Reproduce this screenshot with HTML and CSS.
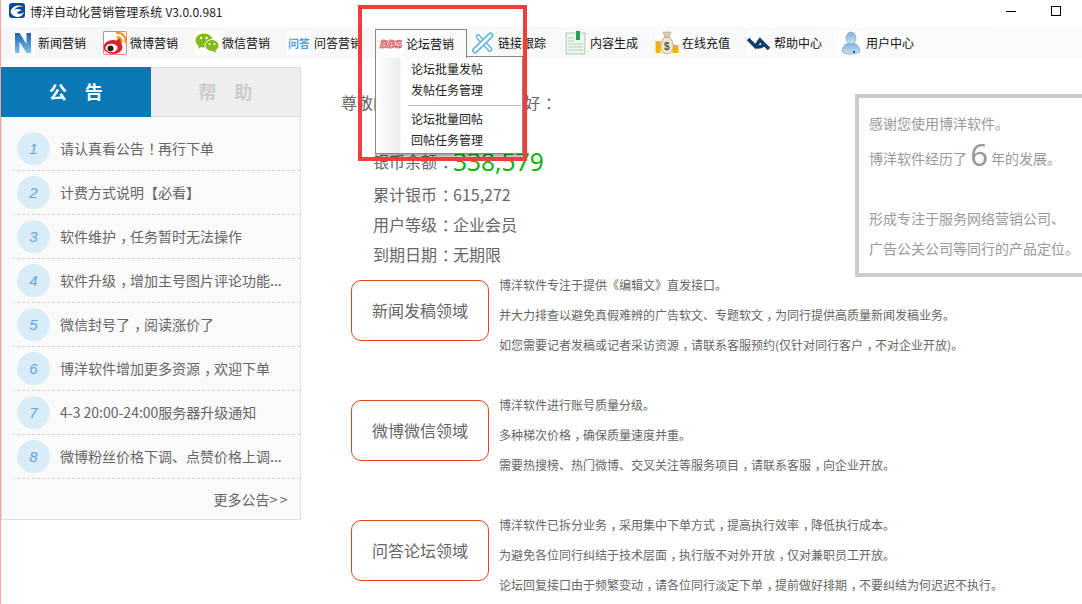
FILE: index.html
```html
<!DOCTYPE html>
<html lang="zh-CN">
<head>
<meta charset="utf-8">
<title>博洋自动化营销管理系统</title>
<link rel="stylesheet" href="styles.css">
</head>
<body>
<div class="app">
  <header class="titlebar">
    <svg class="logo" viewBox="0 0 16 16"><rect x="0" y="0" width="16" height="15" rx="3" fill="#0d4a94"/><path d="M1.500 9C2.500 4 8 1 14.500 3.500C10 3 6 4.500 5 7.500C7 5.500 11 5.500 12.500 8C10 8 8.500 8.500 8 10C10 11.500 13 11 15 9C14 13 9 15 6 13.500C4 12.500 2 11 1.500 9Z" fill="#fff"/></svg>
    <span class="title">博洋自动化营销管理系统 V3.0.0.981</span>
    <div class="winbtns"><i class="win-min"></i><i class="win-max"></i></div>
  </header>

  <nav class="toolbar">
    <a class="tool"><span class="ico"><svg viewBox="0 0 24 24"><defs><linearGradient id="ng" x1="0" y1="0" x2="0" y2="1"><stop offset="0" stop-color="#1c62ad"/><stop offset="1" stop-color="#7cc2ec"/></linearGradient></defs><path d="M4 22V2h4.500l7 11V2h4.500v20h-4.500l-7-11v11Z" fill="url(#ng)"/></svg></span><span class="lbl">新闻营销</span></a>
    <a class="tool"><span class="ico ico-red"><svg viewBox="0 0 24 24"><ellipse cx="10" cy="16" rx="9.500" ry="7" fill="#d8232a"/><path d="M13 10.500C15 6 21 6 18 13Z" fill="#d8232a"/><ellipse cx="8.500" cy="17" rx="6" ry="4.200" fill="#fff"/><circle cx="7.500" cy="17.500" r="3" fill="#222"/><path d="M13 2C20 1 24 7 22 12M13.500 6.500C17 6 19 8 18.500 11" fill="none" stroke="#f39a1e" stroke-width="2.200"/></svg></span><span class="lbl">微博营销</span></a>
    <a class="tool"><span class="ico"><svg viewBox="0 0 24 24"><ellipse cx="9" cy="9.500" rx="8.500" ry="7" fill="#83b81a"/><path d="M4 14l-1 4 5-3Z" fill="#83b81a"/><ellipse cx="17" cy="14.500" rx="7" ry="6" fill="#83b81a" stroke="#fff"/><path d="M20 19l2 3-5-2Z" fill="#83b81a"/><circle cx="6" cy="7" r="1.200" fill="#fff"/><circle cx="11.500" cy="7" r="1.200" fill="#fff"/><circle cx="14.500" cy="13" r="1" fill="#fff"/><circle cx="19.500" cy="13" r="1" fill="#fff"/></svg></span><span class="lbl">微信营销</span></a>
    <a class="tool"><span class="ico"><span class="wenda">问答</span></span><span class="lbl">问答营销</span></a>
    <a class="tool tool-open"><span class="ico"><span class="bbs">BBS</span></span><span class="lbl">论坛营销</span></a>
    <a class="tool"><span class="ico"><svg viewBox="0 0 24 24"><g fill="none" stroke-linecap="round"><path d="M7 5.500L19 18.500" stroke="#62b7ea" stroke-width="5"/><path d="M7 5.500L19 18.500" stroke="#fff" stroke-width="2"/><path d="M4 19.500L19.500 4.500" stroke="#62b7ea" stroke-width="6"/><path d="M4 19.500L19.500 4.500" stroke="#fff" stroke-width="2.600"/></g></svg></span><span class="lbl">链接跟踪</span></a>
    <a class="tool"><span class="ico"><svg viewBox="0 0 24 24"><rect x="3" y="2" width="19" height="21" fill="#eef4ee" stroke="#a8c8b0"/><rect x="13" y="0" width="4" height="9" fill="#27a05a"/><path d="M5 7h6M5 10h6M5 13h15M5 16h15M5 19h15" stroke="#b8ccbc"/></svg></span><span class="lbl">内容生成</span></a>
    <a class="tool"><span class="ico"><svg viewBox="0 0 24 24"><rect x="0.500" y="10" width="5" height="12" fill="#f3ae12"/><rect x="17.500" y="14" width="6" height="8" fill="#f3ae12"/><path d="M10 6C4 10 4 23 12 23C20 23 20 10 14 6Z" fill="#eee6d0" stroke="#a89c78" stroke-width=".8"/><path d="M8 1h8l-2 5h-4Z" fill="#d8cfb4" stroke="#a89c78" stroke-width=".6"/><text x="9" y="18.500" class="dollar">$</text></svg></span><span class="lbl">在线充值</span></a>
    <a class="tool"><span class="ico"><svg viewBox="0 0 24 24"><path d="M1 8L8.500 15.500L13 9L22 18M8.500 15.500Q14 17 17 13" fill="none" stroke="#113e6e" stroke-width="3.600"/></svg></span><span class="lbl">帮助中心</span></a>
    <a class="tool"><span class="ico"><svg viewBox="0 0 24 24"><defs><linearGradient id="ug" x1="0" y1="0" x2="0" y2="1"><stop offset="0" stop-color="#7fb0e0"/><stop offset="1" stop-color="#cfe1f3"/></linearGradient></defs><path d="M3 21C3 15 7 12 12 12C17 12 21 15 21 21C15 24 9 24 3 21Z" fill="url(#ug)" stroke="#6a93bd" stroke-width=".6"/><ellipse cx="12" cy="7" rx="5" ry="6" fill="url(#ug)" stroke="#6a93bd" stroke-width=".5"/><circle cx="15" cy="21" r="1" fill="#123"/></svg></span><span class="lbl">用户中心</span></a>
  </nav>

  <main class="body">
    <aside class="side">
      <div class="tabs"><div class="tab tab-on">公告</div><div class="tab">帮助</div></div>
      <ul class="news">
        <li><b>1</b>请认真看公告<span class="cp">！</span>再行下单</li>
        <li><b>2</b>计费方式说明【必看】</li>
        <li><b>3</b>软件维护<span class="cp">，</span>任务暂时无法操作</li>
        <li><b>4</b>软件升级<span class="cp">，</span>增加主号图片评论功能...</li>
        <li><b>5</b>微信封号了<span class="cp">，</span>阅读涨价了</li>
        <li><b>6</b>博洋软件增加更多资源<span class="cp">，</span>欢迎下单</li>
        <li><b>7</b>4-3 20:00-24:00服务器升级通知</li>
        <li><b>8</b>微博粉丝价格下调、点赞价格上调...</li>
      </ul>
      <div class="more">更多公告<span class="arrows">&gt;&gt;</span></div>
    </aside>

    <section class="content">
      <div class="top">
        <div class="info">
          <p class="greet">尊敬的 博洋软件 用户<span class="cp">，</span>您好<span class="cp">：</span></p>
          <p class="line line-first">银币余额<span class="cp">：</span><span class="coin">338,579</span></p>
          <p class="line">累计银币<span class="cp">：</span>615,272</p>
          <p class="line">用户等级<span class="cp">：</span>企业会员</p>
          <p class="line">到期日期<span class="cp">：</span>无期限</p>
        </div>
        <div class="about">
          <p class="about-first">感谢您使用博洋软件。</p>
          <p class="about-years">博洋软件经历了 <span class="six">6</span> 年的发展。</p>
          <p class="gap">形成专注于服务网络营销公司、</p>
          <p>广告公关公司等同行的产品定位。</p>
        </div>
      </div>
      <div class="fields">
        <div class="field">
          <div class="tag">新闻发稿领域</div>
          <div class="desc">
            <p>博洋软件专注于提供《编辑文》直发接口。</p>
            <p>并大力排查以避免真假难辨的广告软文、专题软文<span class="cp">，</span>为同行提供高质量新闻发稿业务。</p>
            <p>如您需要记者发稿或记者采访资源<span class="cp">，</span>请联系客服预约(仅针对同行客户<span class="cp">，</span>不对企业开放)。</p>
          </div>
        </div>
        <div class="field">
          <div class="tag">微博微信领域</div>
          <div class="desc">
            <p>博洋软件进行账号质量分级。</p>
            <p>多种梯次价格<span class="cp">，</span>确保质量速度并重。</p>
            <p>需要热搜榜、热门微博、交叉关注等服务项目<span class="cp">，</span>请联系客服<span class="cp">，</span>向企业开放。</p>
          </div>
        </div>
        <div class="field">
          <div class="tag">问答论坛领域</div>
          <div class="desc">
            <p>博洋软件已拆分业务<span class="cp">，</span>采用集中下单方式<span class="cp">，</span>提高执行效率<span class="cp">，</span>降低执行成本。</p>
            <p>为避免各位同行纠结于技术层面<span class="cp">，</span>执行版不对外开放<span class="cp">，</span>仅对兼职员工开放。</p>
            <p>论坛回复接口由于频繁变动<span class="cp">，</span>请各位同行淡定下单<span class="cp">，</span>提前做好排期<span class="cp">，</span>不要纠结为何迟迟不执行。</p>
          </div>
        </div>
      </div>
    </section>
  </main>

  <div class="menu">
    <div class="menu-item">论坛批量发帖</div>
    <div class="menu-item">发帖任务管理</div>
    <div class="menu-sep"></div>
    <div class="menu-item">论坛批量回帖</div>
    <div class="menu-item">回帖任务管理</div>
  </div>
  <div class="callout"></div>
  <div class="edge"></div>
</div>
</body>
</html>
```
FILE: styles.css
```css
* { box-sizing: border-box; margin: 0; padding: 0; }
html, body { width: 1082px; height: 604px; overflow: hidden; background: #fff; }
body { font-family: "Noto Sans CJK SC", "Noto Sans", sans-serif; color: #666; }
ul { list-style: none; }

.app { position: relative; width: 1082px; height: 604px; overflow: hidden; }
.cp { margin-left: .3em; letter-spacing: -.3em; }

.titlebar { height: 27px; display: flex; align-items: center; padding: 0 0 5px 9px; color: #222; font-size: 12px; }
.logo { width: 16px; height: 16px; margin-right: 5px; }
.title { flex: 1; word-spacing: .5px; letter-spacing: .02px; }
.winbtns { display: flex; align-items: center; width: 83px; padding-left: 7px; }
.win-min { width: 10px; height: 1px; background: #000; margin-right: 35px; }
.win-max { width: 10px; height: 10px; border: 1px solid #000; }

.toolbar { height: 32px; display: flex; padding-left: 11px; background: linear-gradient(90deg, #f6f6f6, #fbfbfb); font-size: 12px; color: #111; }
.tool { width: 92px; height: 32px; display: flex; align-items: center; gap: 3px; }
.lbl { margin-top: -2px; }
.ico { width: 24px; height: 24px; background: #fff; border-radius: 2px; display: flex; align-items: center; justify-content: center; overflow: hidden; flex: none; }
.ico svg { width: 24px; height: 24px; display: block; }
.ico-red { box-shadow: inset 0 0 0 1px #d88; }
.wenda { color: #4e9fe2; font-size: 11px; font-weight: 700; letter-spacing: 0; white-space: nowrap; }
.bbs { color: #fff; font: italic 900 10.500px "Liberation Sans", sans-serif; -webkit-text-stroke: .7px #c8202c; }
.dollar { font: 700 10px "Liberation Sans", sans-serif; fill: #554; }
.tool-open { position: relative; z-index: 3; margin-left: -4px; padding-left: 3px; margin-right: 4px; height: 29px; margin-top: 2px; background: #fafafa; border: 1px solid #888; border-bottom: 0; }

.body { display: flex; padding-left: 1px; padding-top: 8px; }

.side { width: 300px; height: 453px; background: #fafafa; border: 1px solid #ddd; border-width: 0 1px 1px 1px; flex: none; }
.tabs { display: flex; height: 50px; margin: 0 -1px 0 -1px; }
.tab { flex: 1; display: flex; align-items: center; justify-content: center; padding-bottom: 2px; font-size: 18px; font-weight: 700; letter-spacing: 18px; text-indent: 18px; color: #ccc; background: #eee; border: 1px solid #ddd; border-left: 0; }
.tab-on { background: #0a78b4; color: #fff; border: 0; }
.news { padding: 10px 0 0 10px; }
.news li { height: 44px; padding-bottom: 2px; display: flex; align-items: center; font-size: 14px; color: #666; border-bottom: 1px dashed #d5d5d5; white-space: nowrap; }
.news b { width: 33px; height: 33px; margin: 2px 10px 0 5px; border-radius: 50%; background: #d9edf8; color: #66a3db; font: italic 400 15px/33px "Liberation Sans", sans-serif; text-align: center; flex: none; }
.more { padding-top: 10px; padding-right: 10px; text-align: right; font-size: 14px; line-height: 20px; }
.arrows { letter-spacing: 2.500px; }

.content { flex: 1; min-width: 0; padding-left: 40px; }
.top { display: flex; height: 205px; }
.info { width: 514px; flex: none; padding-top: 23px; }
.greet { font-size: 16px; line-height: 24px; white-space: nowrap; }
.line { font-size: 16px; line-height: 30px; padding-left: 32px; white-space: nowrap; }
.line-first { margin-top: 30px; height: 35px; line-height: 35px; display: flex; align-items: center; }
.coin { color: #0db30d; font-size: 24.500px; line-height: 32px; font-family: "Noto Sans", sans-serif; }

.about { width: 240px; height: 183px; margin-top: 27px; flex: none; border: 4px solid #ccc; padding: 10px 0 0 10px; font-size: 14px; line-height: 30px; color: #999; white-space: nowrap; }
.about-first { height: 31px; }
.about-years { height: 36px; line-height: 36px; }
.six { font-family: "Noto Sans", sans-serif; font-size: 31px; vertical-align: -2px; line-height: 30px; }
.about .gap { margin-top: 28px; }

.fields { margin-left: 10px; padding-top: 8px; display: flex; flex-direction: column; gap: 59px; }
.field { display: flex; height: 61px; gap: 10px; }
.tag { width: 138px; height: 61px; padding-bottom: 2px; flex: none; display: flex; align-items: center; justify-content: center; font-size: 16px; color: #666; border: 1px solid #e8431f; border-radius: 10px; }
.desc { font-size: 12px; line-height: 30px; color: #666; white-space: nowrap; margin-top: -10px; }

.menu { position: absolute; left: 375px; top: 56px; width: 148px; height: 98px; z-index: 2; padding: 1px 0 0 35px; font-size: 12px; color: #222; background: linear-gradient(90deg, #fff 0, #ececec 24px, #fff 25px); border: 1px solid #888; box-shadow: 3px 3px 3px rgba(0,0,0,.35); }
.menu-item { height: 21px; line-height: 21px; }
.menu-sep { height: 1px; margin: 5px 1px 2px -3px; background: #bbb; }

.callout { position: absolute; left: 358px; top: 5px; width: 169px; height: 156px; z-index: 4; border: 4px solid #f33c3c; pointer-events: none; }
.edge { position: absolute; left: 0; top: 0; width: 1px; height: 604px; z-index: 4; background: #f4a3a3; }
```
